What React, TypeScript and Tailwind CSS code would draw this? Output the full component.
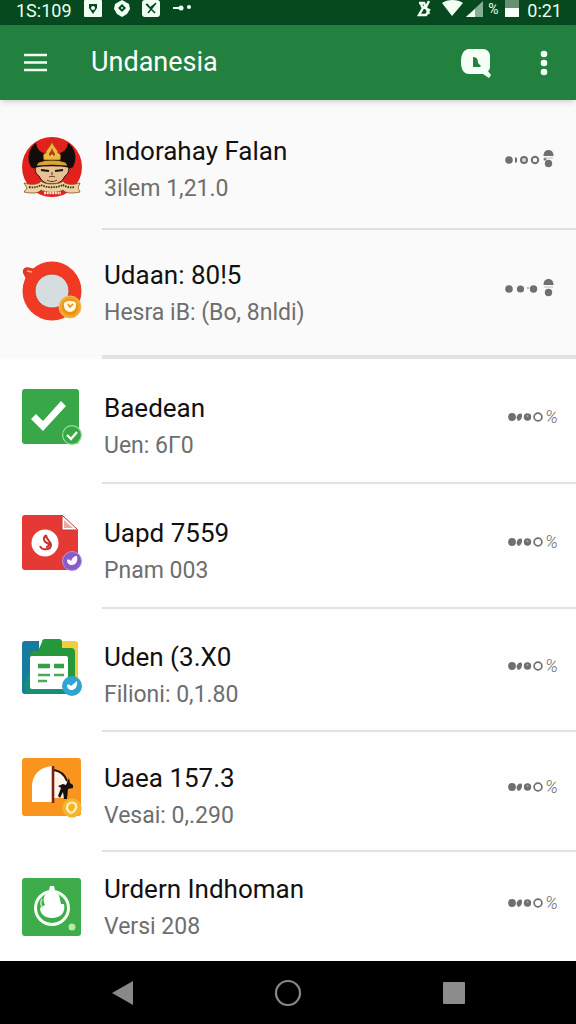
import React from 'react';
import clsx from 'clsx';

const CrestIcon: React.FC = () => (
  <svg viewBox="0 0 60 64" className="h-16 w-15">
    <circle cx="30" cy="32" r="30" fill="#e3211c" />
    <path d="M14 8C7 13 4 23 9 32c5 4 37 4 42 0 5-9 2-19-5-24-1 6-4 9-8 10H22c-4-1-7-4-8-10Z" fill="#120d0b" />
    <path d="M15 30c-3 2-2 9 2 11 3 6 7 8 13 8s10-2 13-8c4-2 5-9 2-11Z" fill="#e8c193" stroke="#26140c" strokeWidth="1" />
    <path d="M16 27c8-3 20-3 28 0l3 5c-9-2-25-2-34 0Z" fill="#d9a32c" stroke="#150e09" strokeWidth="1.5" />
    <path d="M30 6c1 6 6 8 6 12 3 0 3 4 2 7H22c-1-3-1-7 2-7 0-4 5-6 6-12Z" fill="#eebb3f" stroke="#8a5410" strokeWidth="0.8" />
    <path d="M30 12c0 4 3 5 3 8l-3 3-3-3c0-3 3-4 3-8Z" fill="#b5351a" />
    <circle cx="30" cy="21" r="1.5" fill="#f5dc7e" />
    <path d="M19 35l8 1M33 36l8-1" stroke="#1d120d" strokeWidth="2.2" />
    <path d="M27 42c2-1 4-1 6 0M25 45c3 2 7 2 10 0M30 37v3" stroke="#5b3120" strokeWidth="1" fill="none" />
    <path d="M2 48c7 2 15 2 17-2 3 4 19 4 22 0 2 4 10 4 17 2l-2 5 2 4c-9 2-15 1-17-2-4 3-18 3-22 0-2 3-8 4-17 2l3-4Z" fill="#ecd2a0" stroke="#8e4a23" strokeWidth="0.8" />
    <path d="M7 52c5 1 9 0 12-2 6 3 16 3 22 0 3 2 7 3 12 2" fill="none" stroke="#3a2a1c" strokeWidth="1.8" strokeDasharray="1.5 1" />
    <path d="M22 58h17" stroke="#ffe3d7" strokeWidth="2.4" strokeDasharray="2 0.7" />
  </svg>
);

const RingIcon: React.FC = () => (
  <svg viewBox="0 0 60 60" className="h-15 w-15">
    <path d="M1 12c-1-5 3-7 8-5l5 1-9 12Z" fill="#df3a22" />
    <circle cx="30" cy="30" r="29.5" fill="#f03a23" />
    <circle cx="30" cy="30" r="17" fill="#d5dde1" stroke="#d63824" strokeWidth="1" />
    <path d="M5 10l5 1" stroke="#f8b7a4" strokeWidth="1.5" />
    <circle cx="48" cy="46" r="11" fill="#f2a42d" stroke="#f5bd55" strokeWidth="1" />
    <circle cx="48" cy="46" r="8" fill="#e9920f" />
    <path d="M42 42c3-3 9-3 12 0 1 5-2 9-6 9s-7-4-6-9Z" fill="#fff6dc" />
    <path d="M46 43l2 3 3-3" fill="none" stroke="#e9920f" strokeWidth="1.5" />
  </svg>
);

const CheckIcon: React.FC = () => (
  <svg viewBox="0 0 60 60" className="h-15 w-15">
    <rect y="2" width="57" height="55" rx="3" fill="#37a747" />
    <path d="M9 32l5-5 7 7 18-20 5 5-23 25Z" fill="#fff" />
    <circle cx="50" cy="48" r="9.4" fill="#35a845" stroke="#9cdd9a" strokeWidth="1.2" />
    <path d="M45 48l4 4 6-7" fill="none" stroke="#fff" strokeWidth="2.4" />
  </svg>
);

const DocumentIcon: React.FC = () => (
  <svg viewBox="0 0 60 60" className="h-15 w-15">
    <path d="M3 2h37l16 16v36a3 3 0 0 1-3 3H3a3 3 0 0 1-3-3V5a3 3 0 0 1 3-3Z" fill="#e53935" />
    <path d="M40 2v15h16Z" fill="#fff" stroke="#c43432" strokeWidth="1" />
    <path d="M42 7v8h9Z" fill="#e9aaa5" />
    <circle cx="23" cy="30" r="13.5" fill="#fff" />
    <path d="M24 22c-3 3-3 6 1 8 3 1 2 4-1 4M18 33c2 5 11 4 11-1 0-4-5-5-5-10" fill="none" stroke="#c62f2b" strokeWidth="2" />
    <circle cx="50" cy="48" r="9.5" fill="#8a5cc9" stroke="#b399df" strokeWidth="1" />
    <path d="M45 47c2-1 3 0 4 1 1-3 3-5 6-5 1 5-1 9-5 9-3 0-5-2-5-5Z" fill="#fff" />
  </svg>
);

const ClipboardIcon: React.FC = () => (
  <svg viewBox="0 0 60 60" className="h-15 w-15">
    <path d="M3 4h14v53H3a3 3 0 0 1-3-3V7a3 3 0 0 1 3-3Z" fill="#177b9f" />
    <path d="M40 4h13a3 3 0 0 1 3 3v47H40Z" fill="#f2cf3a" />
    <path d="M2 48l12-32h39v41H4Z" fill="#159078" />
    <path d="M8 18a4 4 0 0 1 4-4h4l4-9c0-2 1-3 3-3h14c2 0 3 1 3 3v6h9c3 0 4 2 4 4v38H8Z" fill="#27973b" />
    <rect x="8" y="19" width="38" height="33" rx="2" fill="#fff" />
    <path d="M16 29h12M32 29h10" stroke="#35a044" strokeWidth="4.5" />
    <path d="M16 38h12M32 38h10M16 44h9" stroke="#4aa95a" strokeWidth="2.4" />
    <circle cx="50" cy="49" r="10" fill="#2fa4cf" />
    <path d="M45 48c2-1 3 0 4 1l6-5c1 5-2 9-5 9s-5-2-5-5Z" fill="#fff" />
  </svg>
);

const GateIcon: React.FC = () => (
  <svg viewBox="0 0 60 60" className="h-15 w-15">
    <rect width="59" height="58" rx="3" fill="#f9941f" />
    <path d="M10 44V28C10 17 18 9 30 8v36Z" fill="#fff" />
    <path d="M32 12c7 1 11 6 13 13l-3 15H32Z" fill="#fff4e9" />
    <path d="M31 8v37" stroke="#7d2113" strokeWidth="2.6" />
    <path d="M32 12c6 1 11 5 13 11" fill="none" stroke="#201410" strokeWidth="2" />
    <path d="M47 20l1 5 3 2v3l-5 1-1 10h-3l-1-7-3 6-2-2 3-8-3-2 5-2 3 1Z" fill="#17100e" />
    <circle cx="50" cy="50" r="9.7" fill="#f5b52e" />
    <path d="M45 50c0-6 7-7 9-3 1 4-2 7-5 8-2-1-4-3-4-5Z" fill="none" stroke="#fff0b8" strokeWidth="2.2" />
  </svg>
);

const FruitIcon: React.FC = () => (
  <svg viewBox="0 0 60 60" className="h-15 w-15">
    <rect y="1" width="59" height="58" rx="3" fill="#3fac4c" />
    <circle cx="30" cy="31" r="16.5" fill="none" stroke="#f5fff3" strokeWidth="3" />
    <path d="M27 13l1-4h4l1 4Z" fill="#fff" />
    <path d="M24 17c4-3 10-2 13 1l2 9h3c2 9-4 14-12 14-7 0-12-4-12-10l5-3c-2-4-2-8 1-11Z" fill="#fff" />
    <path d="M20 22c-2 4-1 7 1 9" fill="none" stroke="#d1f1cc" strokeWidth="1.4" />
    <circle cx="50" cy="50" r="3.5" fill="#b7e9a8" />
  </svg>
);

const DotsWithBell: React.FC<{ tight?: boolean }> = ({ tight }) => (
  <svg viewBox="0 0 54 24" className="h-6 w-[54px]" fill="#6f6f6f">
    <circle cx="5" cy="12" r="3.8" />
    {tight ? (
      <>
        <path d="M11 9l2 1v4l-2 1Z" />
        <circle cx="20" cy="12" r="3" fill="#ddd" stroke="#6f6f6f" strokeWidth="2" />
        <circle cx="31" cy="12" r="3.2" fill="none" stroke="#6f6f6f" strokeWidth="2" />
        <circle cx="41" cy="11" r="1.5" />
      </>
    ) : (
      <>
        <circle cx="16.5" cy="12" r="3.6" />
        <circle cx="24" cy="11" r="0.8" />
        <circle cx="29.5" cy="12" r="3.7" />
      </>
    )}
    <path d="M39.5 8c0-4 2-6 5-6s5 2 5 6Z" />
    <path d="M40 10h9" stroke="#bbb" strokeWidth="1" />
    <circle cx="44.5" cy="15.5" r="3.7" />
  </svg>
);

const DotsWithPercent: React.FC = () => (
  <span className="flex h-6 items-center text-lg text-[#6f6f6f]">
    <svg viewBox="0 0 38 24" className="h-6 w-[38px]" fill="#6f6f6f">
      <circle cx="5" cy="12" r="3.9" />
      <path d="M9.500 13c0-4 5-6 5.500-3s-2 6-4 6Z" />
      <circle cx="20.5" cy="12" r="3.7" />
      <circle cx="20.5" cy="11" r="1" fill="#aaa" />
      <circle cx="31" cy="12" r="3.9" fill="none" stroke="#6f6f6f" strokeWidth="1.7" />
    </svg>
    <span className="font-light italic">%</span>
  </span>
);

const apps = [
  {
    id: 1,
    title: 'Indorahay Falan',
    detail: '3ilem 1,21.0',
    icon: CrestIcon,
    action: 'tight',
    rowClass: 'h-[130px] bg-[#fafafa]',
    lineClass: 'border-b-2 border-[#dedede]',
    textClass: 'pt-2.5',
    iconClass: 'pt-1'
  },
  {
    id: 2,
    title: 'Udaan: 80!5',
    detail: 'Hesra iB: (Bo, 8nldi)',
    icon: RingIcon,
    action: 'bell',
    rowClass: 'h-[129px] bg-[#fafafa]',
    lineClass: 'border-b-4 border-[#e2e2e2]',
    textClass: '',
    iconClass: 'pb-2'
  },
  {
    id: 3,
    title: 'Baedean',
    detail: 'Uen: 6Γ0',
    icon: CheckIcon,
    action: 'percent',
    rowClass: 'h-[125px]',
    lineClass: 'border-b-2 border-[#e2e2e2]',
    textClass: 'pt-2.5',
    iconClass: 'pb-2.5'
  },
  {
    id: 4,
    title: 'Uapd 7559',
    detail: 'Pnam 003',
    icon: DocumentIcon,
    action: 'percent',
    rowClass: 'h-[125px]',
    lineClass: 'border-b-2 border-[#e2e2e2]',
    textClass: 'pt-2.5',
    iconClass: 'pb-2'
  },
  {
    id: 5,
    title: 'Uden (3.X0',
    detail: 'Filioni: 0,1.80',
    icon: ClipboardIcon,
    action: 'percent',
    rowClass: 'h-[123px]',
    lineClass: 'border-b-2 border-[#e2e2e2]',
    textClass: 'pt-2.5',
    iconClass: 'pb-2'
  },
  {
    id: 6,
    title: 'Uaea 157.3',
    detail: 'Vesai: 0,.290',
    icon: GateIcon,
    action: 'percent',
    rowClass: 'h-[120px]',
    lineClass: 'border-b-2 border-[#e2e2e2]',
    textClass: 'pt-2.5',
    iconClass: 'pb-2'
  },
  {
    id: 7,
    title: 'Urdern Indhoman',
    detail: 'Versi 208',
    icon: FruitIcon,
    action: 'percent',
    rowClass: 'h-[109px]',
    lineClass: '',
    textClass: '',
    iconClass: ''
  }
];

const StatusBar: React.FC = () => (
  <div className="flex h-[25px] items-start justify-between bg-[#07491f] pr-3.5 pl-4 text-lg leading-[21px] text-[#eafff0]">
    <div className="flex">
      <span className="w-[67px]">1S:109</span>
      <svg viewBox="0 0 110 18" className="h-[18px] w-[110px]" fill="#f2fff5">
        <rect x="1" y="0" width="18" height="17" rx="1" />
        <path d="M6 4h8v4l-4 6-4-6Z" fill="#07491f" />
        <circle cx="10" cy="8" r="2" fill="#f2fff5" />
        <path d="M39 0l7 4 1 5-3 5-5 3-5-3-3-5 1-5Z" />
        <path d="M39 4l4 4-4 4-4-4Z" fill="#07491f" />
        <circle cx="39" cy="8" r="1" />
        <rect x="59" y="0" width="18" height="17" rx="3" />
        <path d="M63 4l9 9M73 3l-8 10M64 4l3 4 5-4" stroke="#07491f" strokeWidth="1.5" fill="none" />
        <path d="M90 8h8" stroke="#f2fff5" strokeWidth="2" />
        <circle cx="98" cy="8" r="2.5" />
        <circle cx="106" cy="7" r="2" />
      </svg>
    </div>
    <div className="flex">
      <svg viewBox="0 0 68 18" className="h-[18px] w-[68px]" fill="#f2fff5">
        <path d="M3 3h5l5 11M4 2l3 6-4 7h7l3-5-8-4M13 1l-3 6" fill="none" stroke="#f2fff5" strokeWidth="2.4" />
        <path d="M26 3c5-4 16-4 21 0L36 16Z" />
        <path d="M67 1v16H50Z" opacity="0.55" />
        <path d="M59 9v8h-9Z" />
      </svg>
      <span className="w-[21px] pl-1 text-sm leading-[18px]">%</span>
      <svg viewBox="0 0 14 18" className="h-[18px] w-3.5">
        <rect width="14" height="9" fill="#66906f" />
        <rect y="8" width="14" height="9" fill="#f7fff8" />
      </svg>
      <span className="pl-2">0:21</span>
    </div>
  </div>
);

const AppBar: React.FC = () => (
  <header className="relative flex h-[75px] items-center bg-[#22813f] pr-4 pl-5 text-white shadow-md">
    <button aria-label="Menu" className="p-1">
      <svg viewBox="0 0 23 20" className="h-5 w-[23px]" stroke="#f0fff2" strokeWidth="2.6">
        <path d="M0 2h23M0 9.500h23M0 17h23" />
      </svg>
    </button>
    <h1 className="flex-1 pl-10 text-[27px]">Undanesia</h1>
    <button aria-label="Search" className="pr-9">
      <svg viewBox="0 0 32 32" className="h-8 w-8">
        <path d="M9 2h14c4 0 7 3 7 7v11c0 2-1 3-2 4l3 4-2 3-6-4H9c-5 0-8-4-8-12S4 2 9 2Z" fill="#f5fff5" />
        <path d="M13 10c5 0 5 4 5 6l3 3-1 1h-7Z" fill="#22813f" />
      </svg>
    </button>
    <button aria-label="More" className="px-2">
      <svg viewBox="0 0 16 28" className="h-7 w-4" fill="#f2fff4">
        <circle cx="8" cy="5" r="3.3" />
        <circle cx="8" cy="14" r="3.3" />
        <circle cx="8" cy="23" r="3.3" />
      </svg>
    </button>
  </header>
);

const NavigationBar: React.FC = () => (
  <nav className="mt-auto flex h-[63px] items-center justify-around bg-black px-10">
    <button aria-label="Back">
      <svg viewBox="0 0 24 28" className="h-7 w-6">
        <path d="M2 14L23 2v24Z" fill="#888" />
      </svg>
    </button>
    <button aria-label="Home">
      <svg viewBox="0 0 28 28" className="size-7">
        <circle cx="14" cy="14" r="12" fill="none" stroke="#888" strokeWidth="2.2" />
      </svg>
    </button>
    <button aria-label="Recent">
      <svg viewBox="0 0 24 24" className="size-6">
        <rect x="1" y="1" width="22" height="22" rx="1" fill="#8c8c8c" />
      </svg>
    </button>
  </nav>
);

const App: React.FC = () => {
  return (
    <div className="flex min-h-screen flex-col bg-[#fefefe] font-['Roboto',sans-serif]">
      <StatusBar />
      <AppBar />

      <ul>
        {apps.map((app) => {
          const Icon = app.icon;
          return (
            <li key={app.id} className={clsx('flex', app.rowClass)}>
              <div className="flex w-[102px] items-center pl-[22px]">
                <div className={app.iconClass}>
                  <Icon />
                </div>
              </div>
              <div className={clsx('flex flex-1 items-center pr-[18px] pl-0.5', app.lineClass)}>
                <div className={clsx('flex-1', app.textClass)}>
                  <h2 className="text-[26px] leading-10 text-[#111]">{app.title}</h2>
                  <p className="text-[23px] leading-9 text-[#6e6e6e]">{app.detail}</p>
                </div>
                <button aria-label={`Options for ${app.title}`} className="pb-2">
                  {app.action === 'percent' ? <DotsWithPercent /> : <DotsWithBell tight={app.action === 'tight'} />}
                </button>
              </div>
            </li>
          );
        })}
      </ul>

      <NavigationBar />
    </div>
  );
};

export default App;
